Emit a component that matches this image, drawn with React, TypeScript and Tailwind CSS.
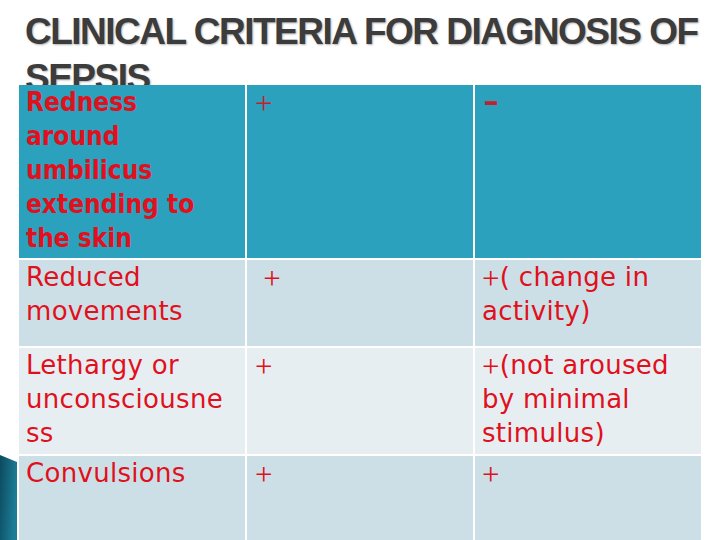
import React from "react";

type Row = {
  criterion: string[];
  yes: string;
  no: string[];
  bg: string;
  height: string;
};

const thinPlus =
  "relative top-[2px] inline-block font-['Liberation_Serif',serif] font-normal text-[31px] leading-[34px] align-top";

function Plus({ dark = false }: { dark?: boolean }) {
  return <span className={`${thinPlus} ${dark ? "text-[#c4202c]" : ""}`}>+</span>;
}

function Corner() {
  // slanted teal bar on the left edge of the slide
  return (
    <svg className="absolute left-0 top-[455px]" width="17" height="85" viewBox="0 0 17 85">
      <defs>
        <linearGradient id="tealbar" x1="0" y1="0" x2="1" y2="0.3">
          <stop offset="0" stopColor="#0b4a5e" />
          <stop offset="1" stopColor="#1d7d97" />
        </linearGradient>
      </defs>
      <polygon points="0,0 17,7 17,85 0,85" fill="url(#tealbar)" />
    </svg>
  );
}

export default function App() {
  const rows: Row[] = [
    {
      criterion: ["Reduced", "movements"],
      yes: " +",
      no: ["+( change in", "activity)"],
      bg: "bg-[#cddfe6]",
      height: "h-[86px]",
    },
    {
      criterion: ["Lethargy or", "unconsciousne", "ss"],
      yes: "+",
      no: ["+(not aroused", "by minimal", "stimulus)"],
      bg: "bg-[#e7eef2]",
      height: "h-[106px]",
    },
    {
      criterion: ["Convulsions"],
      yes: "+",
      no: ["+"],
      bg: "bg-[#cddfe6]",
      height: "h-[90px]",
    },
  ];

  const renderLine = (line: string) =>
    line.startsWith("+") ? (
      <>
        <Plus />
        {line.slice(1)}
      </>
    ) : (
      line
    );

  return (
    <div className="relative h-[540px] w-[720px] overflow-hidden bg-white font-['DejaVu_Sans',sans-serif]">
      <Corner />

      {/* Title */}
      <div className="h-[85px] pt-[9px] pl-[25px]">
        <h1 className="whitespace-nowrap font-['Liberation_Sans',sans-serif] text-[37px] font-bold leading-[46px] tracking-[-1.5px] text-[#3c3c3c] [text-shadow:1px_1px_2px_rgba(0,0,0,0.3)]">
          CLINICAL CRITERIA FOR DIAGNOSIS OF
          <br />
          SEPSIS
        </h1>
      </div>

      {/* Table */}
      <div className="relative z-10 ml-[19px] flex w-[682px] flex-col gap-[2px] text-[26px] leading-[34px] text-[#e0101c]">
        <div className="grid h-[173px] grid-cols-3 gap-x-[2px]">
          <div className="bg-[#2ca1be] px-[7px] font-bold font-stretch-condensed">
            {["Redness", "around", "umbilicus", "extending to", "the skin"].map((l) => (
              <div key={l} className="whitespace-nowrap">
                {l}
              </div>
            ))}
          </div>
          <div className="bg-[#2ca1be] px-[8px]">
            <Plus dark />
          </div>
          <div className="bg-[#2ca1be] px-[8px] font-bold text-[#c4202c]">
            <span className="inline-block origin-left scale-x-150">-</span>
          </div>
        </div>

        {rows.map((r) => (
          <div key={r.criterion[0]} className={`grid grid-cols-3 gap-x-[2px] ${r.height}`}>
            <div className={`${r.bg} px-[7px] tracking-[0.3px]`}>
              {r.criterion.map((l) => (
                <div key={l} className="whitespace-nowrap">
                  {l}
                </div>
              ))}
            </div>
            <div className={`${r.bg} whitespace-pre px-[8px]`}>
              {r.yes.startsWith(" ") ? " " : ""}
              <Plus />
            </div>
            <div className={`${r.bg} px-[7px] tracking-[0.3px]`}>
              {r.no.map((l) => (
                <div key={l} className="whitespace-nowrap">
                  {renderLine(l)}
                </div>
              ))}
            </div>
          </div>
        ))}
      </div>
    </div>
  );
}
